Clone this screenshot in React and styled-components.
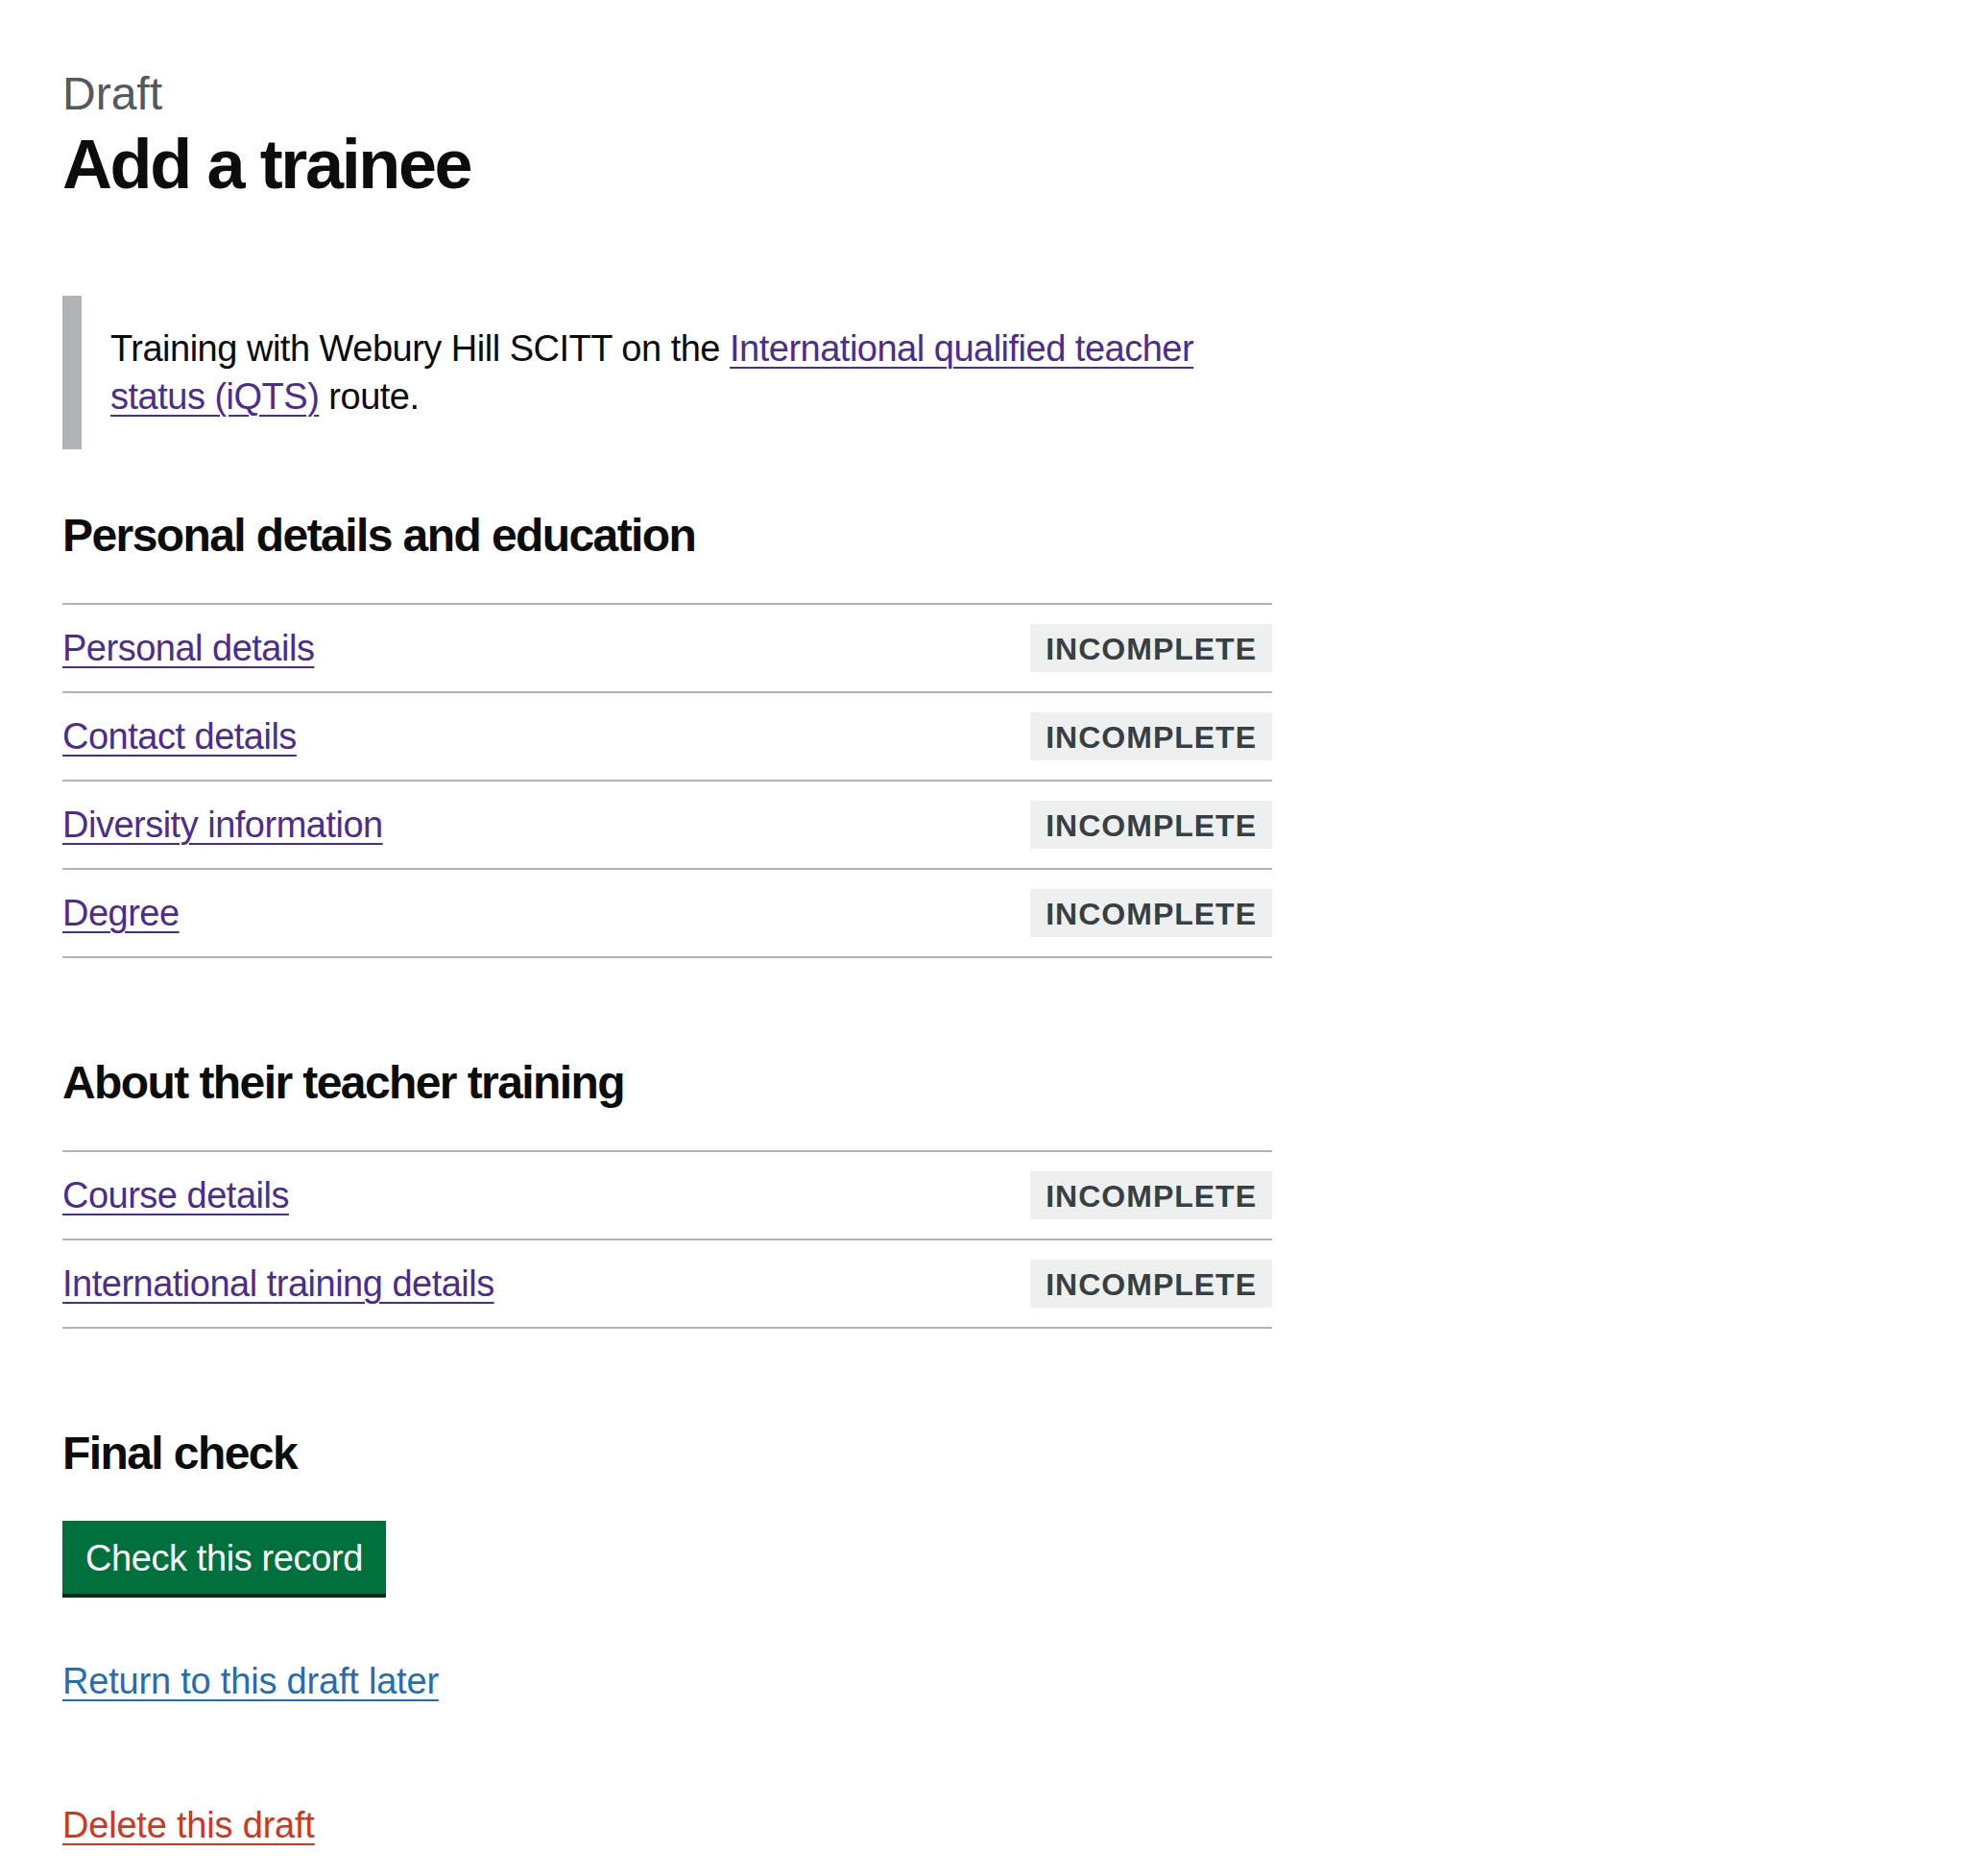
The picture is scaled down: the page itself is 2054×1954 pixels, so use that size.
import React from 'react';
import styled, { createGlobalStyle } from 'styled-components';

const GlobalStyle = createGlobalStyle`
  body {
    margin: 0;
    background: #ffffff;
    color: #0b0c0c;
    font-family: "Liberation Sans", Arial, sans-serif;
  }
`;

const Page = styled.main`
  padding: 68px 65px 20px;
`;

const Column = styled.div`
  width: 1260px;
`;

const Caption = styled.span`
  display: block;
  margin-bottom: 3px;
  font-size: 48px;
  line-height: 60px;
  color: #505a5f;
`;

const Heading = styled.h1`
  margin: 0 0 97px;
  font-size: 72px;
  line-height: 80px;
  font-weight: 700;
  letter-spacing: -0.033em;
`;

const Inset = styled.div`
  margin: 0 0 60px;
  padding: 30px 0 30px 30px;
  border-left: 20px solid #b1b4b6;
  font-size: 38px;
  line-height: 50px;
  letter-spacing: -0.5px;
`;

const SectionHeading = styled.h2`
  margin: 0 0 40px;
  font-size: 48px;
  line-height: 60px;
  font-weight: 700;
  letter-spacing: -0.033em;
`;

const TaskList = styled.ul`
  list-style: none;
  margin: 0 0 100px;
  padding: 0;
  border-top: 2px solid #b1b4b6;
`;

const TaskItem = styled.li`
  display: flex;
  align-items: center;
  justify-content: space-between;
  padding: 20px 0;
  border-bottom: 2px solid #b1b4b6;
`;

const Link = styled.a`
  color: ${props => props.colour || '#4c2c92'};
  text-decoration: underline;
  text-decoration-thickness: 2px;
  text-underline-offset: 0.1578em;
  cursor: pointer;
`;

const TaskLink = styled(Link)`
  font-size: 38px;
  line-height: 50px;
  letter-spacing: -0.5px;
`;

const Tag = styled.strong`
  display: inline-block;
  padding: 10px 16px 8px;
  font-size: 32px;
  line-height: 32px;
  font-weight: 700;
  letter-spacing: 1px;
  text-transform: uppercase;
  color: #383f43;
  background: #eeefef;
`;

const Button = styled.button`
  display: block;
  margin: 0 0 66px;
  padding: 16px 20px 14px;
  border: 4px solid transparent;
  border-radius: 0;
  background: #00703c;
  box-shadow: 0 4px 0 #002d18;
  color: #ffffff;
  font-family: inherit;
  font-size: 38px;
  line-height: 38px;
  letter-spacing: -0.4px;
  cursor: pointer;
`;

const Para = styled.p`
  margin: 0 0 100px;
  font-size: 38px;
  line-height: 50px;
  letter-spacing: -0.2px;

  &:last-child {
    margin-bottom: 0;
  }
`;

const sections = [
  {
    title: 'Personal details and education',
    items: ['Personal details', 'Contact details', 'Diversity information', 'Degree']
  },
  {
    title: 'About their teacher training',
    items: ['Course details', 'International training details']
  }
];

export default function App() {
  return (
    <>
      <GlobalStyle />
      <Page>
        <Column>
          <Caption>Draft</Caption>
          <Heading>Add a trainee</Heading>

          <Inset>
            Training with Webury Hill SCITT on the{' '}
            <Link href="#">International qualified teacher status (iQTS)</Link> route.
          </Inset>

          {sections.map(section => (
            <section key={section.title}>
              <SectionHeading>{section.title}</SectionHeading>
              <TaskList>
                {section.items.map(item => (
                  <TaskItem key={item}>
                    <TaskLink href="#">{item}</TaskLink>
                    <Tag>Incomplete</Tag>
                  </TaskItem>
                ))}
              </TaskList>
            </section>
          ))}

          <SectionHeading>Final check</SectionHeading>
          <Button type="button">Check this record</Button>

          <Para>
            <Link href="#" colour="#1d70b8">Return to this draft later</Link>
          </Para>
          <Para>
            <Link href="#" colour="#d4351c">Delete this draft</Link>
          </Para>
        </Column>
      </Page>
    </>
  );
}
